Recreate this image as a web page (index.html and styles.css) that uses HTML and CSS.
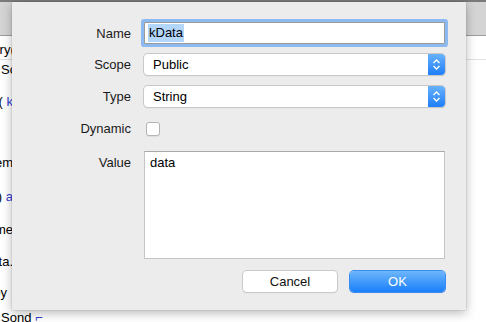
FILE: index.html
```html
<!DOCTYPE html>
<html lang="en">
<head>
    <meta charset="UTF-8">
    <title>Add Constant</title>
    <link rel="stylesheet" href="styles.css">
</head>
<body>
    <div class="window">
        <div class="title-edge"></div>
        <div class="toolbar"></div>
        <div class="content">
            <div class="code-line divided"><span>Query(</span></div>
            <div class="code-line start"><span>Scope</span></div>
            <div class="code-line l3"><span>t( <i>k</i></span></div>
            <div class="code-line l4"><span>Item</span></div>
            <div class="code-line l5"><span>) <i>a</i></span></div>
            <div class="code-line l6"><span>Name</span></div>
            <div class="code-line l7"><span>Data.</span></div>
            <div class="code-line l8"><span>by</span></div>
            <div class="code-line start l9"><span>Sond <i>&#x2310;</i></span></div>
        </div>

        <div class="sheet">
            <form class="sheet-form">
                <div class="row row-name">
                    <label for="name">Name</label>
                    <div class="field focused"><span class="selection">kData</span></div>
                </div>
                <div class="row row-scope">
                    <label>Scope</label>
                    <div class="popup">
                        <span class="popup-value">Public</span>
                        <span class="popup-arrows">
                            <svg width="9" height="13" viewBox="0 0 9 13"><path d="M1.5 5 L4.5 2 L7.5 5 M1.5 8 L4.5 11 L7.5 8" fill="none" stroke="#fff" stroke-width="1.3"/></svg>
                        </span>
                    </div>
                </div>
                <div class="row row-type">
                    <label>Type</label>
                    <div class="popup">
                        <span class="popup-value">String</span>
                        <span class="popup-arrows">
                            <svg width="9" height="13" viewBox="0 0 9 13"><path d="M1.5 5 L4.5 2 L7.5 5 M1.5 8 L4.5 11 L7.5 8" fill="none" stroke="#fff" stroke-width="1.3"/></svg>
                        </span>
                    </div>
                </div>
                <div class="row row-dynamic">
                    <label>Dynamic</label>
                    <div><span class="checkbox"></span></div>
                </div>
                <div class="row row-value">
                    <label>Value</label>
                    <div class="text-area">data</div>
                </div>
                <div class="buttons">
                    <button type="button" class="btn">Cancel</button>
                    <button type="button" class="btn btn-default">OK</button>
                </div>
            </form>
        </div>
    </div>
</body>
</html>
```

FILE: styles.css
```css
body {
    margin: 0;
    padding: 0;
    font-family: 'Liberation Sans', Arial, sans-serif;
    font-size: 13px;
    color: #000;
}
.window {
    position: relative;
    width: 486px;
    height: 322px;
    overflow: hidden;
    background: #fff;
}
.title-edge {
    height: 2px;
    background: #7a7a7a;
}
.toolbar {
    height: 33px;
    background: #d4d4d4;
    border-bottom: 1px solid #9c9c9c;
}
.content {
    padding-top: 4px;
}
.code-line {
    display: flex;
    justify-content: flex-end;
    width: 13px;
    height: 19px;
    line-height: 19px;
    white-space: nowrap;
}
.code-line span {
    flex: none;
}
.code-line i {
    font-style: normal;
    color: #2f3fd0;
}
.code-line.divided {
    width: 486px;
    justify-content: flex-start;
    border-bottom: 1px solid #e2e2e2;
}
.code-line.divided span {
    margin-left: -25px;
}
.code-line.start {
    width: 200px;
    justify-content: flex-start;
    padding-left: 1px;
}
.l3 { margin-top: 13px; }
.l4 { margin-top: 42px; }
.l5 { margin-top: 15px; }
.l6 { margin-top: 14px; }
.l7 { margin-top: 13px; }
.l8 { margin-top: 12px; width: 7px; }
.l9 { margin-top: 6px; }
.sheet {
    position: absolute;
    left: 12px;
    top: 2px;
    width: 454px;
    height: 308px;
    background: #ececec;
    box-shadow: 0 3px 10px rgba(0, 0, 0, 0.28), 0 0 1px rgba(0, 0, 0, 0.35);
}
.sheet-form {
    padding-top: 20px;
}
.row {
    display: grid;
    grid-template-columns: 119px 301px;
    column-gap: 13px;
    align-items: center;
}
.row label {
    text-align: right;
    color: #1a1a1a;
}
.row-name {
    height: 22px;
}
.row-scope {
    height: 21px;
    margin-top: 10px;
}
.row-type {
    height: 21px;
    margin-top: 11px;
}
.row-dynamic {
    height: 21px;
    margin-top: 11px;
}
.row-value {
    height: 108px;
    margin-top: 12px;
    align-items: start;
}
.row-value label {
    padding-top: 4px;
}
.field {
    height: 22px;
    box-sizing: border-box;
    background: #fff;
    border: 1px solid #9a9a9a;
    padding: 1px 3px;
    line-height: 18px;
}
.focused {
    box-shadow: 0 0 0 3px #8db9f1;
    border-radius: 1px;
}
.selection {
    display: inline-block;
    background: #b3d6fd;
    padding: 0 1px;
    line-height: 18px;
}
.popup {
    display: flex;
    height: 21px;
    box-sizing: border-box;
    background: #fff;
    border-radius: 4px;
    box-shadow: 0 0 0 1px #c9c9c9, 0 1px 1px rgba(0, 0, 0, 0.25);
    overflow: hidden;
}
.popup-value {
    flex: 1;
    padding-left: 9px;
    line-height: 21px;
}
.popup-arrows {
    width: 17px;
    display: flex;
    align-items: center;
    justify-content: center;
    background: linear-gradient(to bottom, #67b1fc, #1f7ff7);
}
.checkbox {
    display: block;
    width: 14px;
    height: 14px;
    margin-left: 2px;
    box-sizing: border-box;
    background: #fff;
    border: 1px solid #b4b4b4;
    border-radius: 3px;
    box-shadow: 0 1px 0 rgba(0, 0, 0, 0.06);
}
.text-area {
    height: 108px;
    box-sizing: border-box;
    background: #fff;
    border: 1px solid #c4c4c4;
    border-top-color: #a9a9a9;
    padding: 3px 5px;
    line-height: 16px;
}
.buttons {
    display: flex;
    justify-content: flex-end;
    gap: 13px;
    width: 433px;
    margin-top: 12px;
}
.btn {
    height: 21px;
    width: 94px;
    font-family: inherit;
    font-size: 13px;
    color: #111;
    background: #fff;
    border: none;
    border-radius: 4px;
    box-shadow: 0 0 0 1px #c9c9c9, 0 1px 1px rgba(0, 0, 0, 0.2);
    padding: 0;
}
.btn-default {
    width: 95px;
    color: #fff;
    background: linear-gradient(to bottom, #6db6fb, #1a7ffa);
    box-shadow: 0 0 0 1px #3a8cf3, 0 1px 1px rgba(0, 0, 0, 0.2);
}
```
